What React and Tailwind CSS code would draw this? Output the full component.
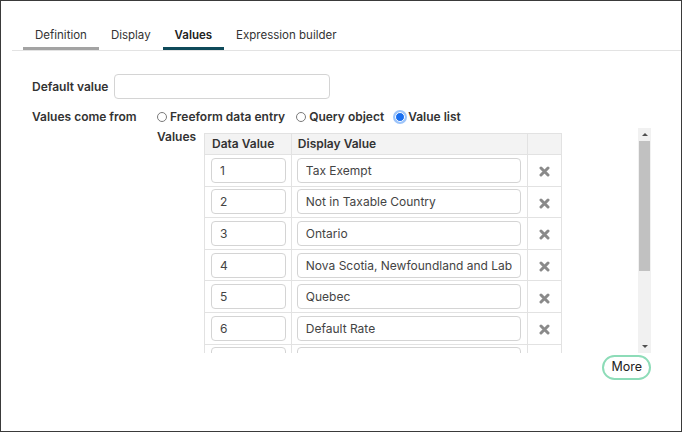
import React from "react";

const rows = [
  { id: 1, value: "1", display: "Tax Exempt" },
  { id: 2, value: "2", display: "Not in Taxable Country" },
  { id: 3, value: "3", display: "Ontario" },
  { id: 4, value: "4", display: "Nova Scotia, Newfoundland and Labrador" },
  { id: 5, value: "5", display: "Quebec" },
  { id: 6, value: "6", display: "Default Rate" },
  { id: 7, value: "7", display: "Alberta" },
];

function Radio({ label, checked }) {
  return (
    <label className="flex items-center gap-[3px] mr-[11px]">
      {checked ? (
        <span className="w-[10px] h-[10px] rounded-full bg-[#1a6ff0] ring-2 ring-[#9cc4fa] border border-white" />
      ) : (
        <span className="w-[10px] h-[10px] rounded-full border border-[#7a7a7a] bg-white" />
      )}
      <span className="font-semibold">{label}</span>
    </label>
  );
}

function RemoveIcon() {
  return (
    <svg width="11" height="11" viewBox="0 0 11 11">
      <path
        d="M2 2 L9 9 M9 2 L2 9"
        stroke="#8a8a8a"
        strokeWidth="3"
        strokeLinecap="round"
        fill="none"
      />
    </svg>
  );
}

export default function App() {
  const tabs = ["Definition", "Display", "Values", "Expression builder"];
  const active = "Values";

  return (
    <div className="w-[682px] h-[432px] bg-white border border-[#3a3a3a] text-[12px] text-[#333] font-['Inter','Open_Sans',sans-serif] overflow-hidden">
      <div className="ml-[11px] mt-[25px] pl-[11px] flex border-b border-[#e3e3e3]">
        {tabs.map((t) => (
          <div
            key={t}
            className={
              "px-3 pb-[3px] border-b-[3px] leading-[18px] text-[11.5px] " +
              (t === active
                ? "border-[#0f4a5a] font-semibold text-[#222]"
                : t === "Definition"
                ? "border-[#a3a3a3]"
                : "border-transparent")
            }
          >
            {t}
          </div>
        ))}
      </div>

      <div className="ml-[31px] mt-[23px] flex items-center">
        <span className="w-[82px] font-semibold">Default value</span>
        <input
          type="text"
          className="w-[216px] h-[25px] rounded-[4px] border border-[#d4d4d4] px-2 outline-none"
        />
      </div>

      <div className="ml-[31px] mt-[10px] flex">
        <span className="w-[125px] font-semibold leading-[16px]">Values come from</span>
        <div className="flex flex-col">
          <div className="flex items-center leading-[16px]">
            <Radio label="Freeform data entry" />
            <Radio label="Query object" />
            <Radio label="Value list" checked />
          </div>
          <div className="flex mt-[3px]">
            <span className="w-[47px] font-semibold leading-[18px]">Values</span>
            <div className="flex w-[447px] h-[225px]">
              <div className="flex-1 overflow-hidden pt-[5px]">
                <table className="w-[358px] border-collapse">
                  <thead>
                    <tr className="bg-[#f3f3f3] h-[21px]">
                      <th className="w-[87px] border border-[#e2e2e2] text-left font-semibold px-[7px]">
                        Data Value
                      </th>
                      <th className="w-[237px] border border-[#e2e2e2] text-left font-semibold px-[6px]">
                        Display Value
                      </th>
                      <th className="w-[34px] border border-[#e2e2e2]" />
                    </tr>
                  </thead>
                  <tbody>
                    {rows.map((r) => (
                      <tr key={r.id} className="h-[31.6px]">
                        <td className="border border-[#e2e2e2] pl-[6px] pr-[5px]">
                          <input
                            type="text"
                            defaultValue={r.value}
                            className="w-full h-[25px] rounded-[4px] border border-[#d4d4d4] px-2 outline-none text-[#444]"
                          />
                        </td>
                        <td className="border border-[#e2e2e2] pl-[5px] pr-[6px]">
                          <input
                            type="text"
                            defaultValue={r.display}
                            className="w-full h-[25px] rounded-[4px] border border-[#d4d4d4] px-2 outline-none text-[#444]"
                          />
                        </td>
                        <td className="border border-[#e2e2e2]">
                          <div className="flex justify-center pt-[3px]">
                            <RemoveIcon />
                          </div>
                        </td>
                      </tr>
                    ))}
                  </tbody>
                </table>
              </div>
              <div className="w-[13px] bg-[#f1f1f1] flex flex-col items-center">
                <div className="h-[13px] flex items-center justify-center">
                  <span className="w-0 h-0 border-x-[3px] border-x-transparent border-b-[3px] border-b-[#505050]" />
                </div>
                <div className="w-[11px] h-[130px] bg-[#c1c1c1]" />
                <div className="flex-1" />
                <div className="h-[13px] flex items-center justify-center">
                  <span className="w-0 h-0 border-x-[3px] border-x-transparent border-t-[3px] border-t-[#505050]" />
                </div>
              </div>
            </div>
          </div>
          <div className="flex justify-end mt-[2px]">
            <button className="h-[25px] px-[7px] rounded-full border-2 border-[#8ddcb8] text-[#222] text-[12.5px] leading-none">
              More
            </button>
          </div>
        </div>
      </div>
    </div>
  );
}
